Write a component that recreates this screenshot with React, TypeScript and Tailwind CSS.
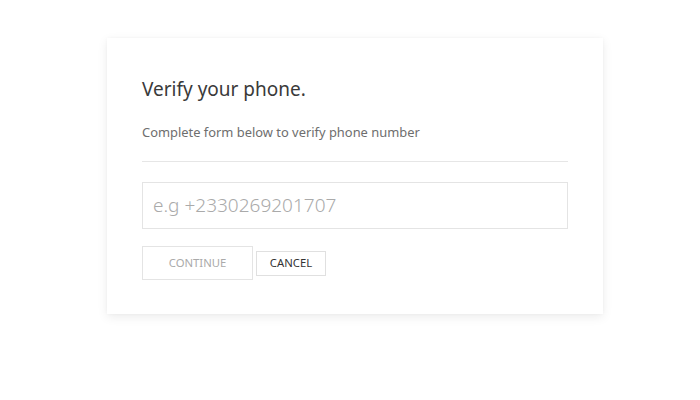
import React from "react";

export default function App() {
  return (
    <div className="w-[700px] h-[400px] bg-white" style={{ fontFamily: '"Noto Sans", "Open Sans", sans-serif' }}>
      <div className="pt-[38px] pl-[107px]">
        <div className="w-[496px] h-[276px] bg-white shadow-[0_3px_10px_rgba(0,0,0,0.08),0_0_3px_rgba(0,0,0,0.03)] pt-[38px] px-[35px]">
          <h1 className="text-[19px] leading-[26px] text-[#3a3a3a] font-normal">Verify your phone.</h1>
          <p className="mt-[21px] text-[12.9px] leading-[18px] text-[#6e6e6e]">Complete form below to verify phone number</p>
          <div className="mt-[20px] h-px bg-[#e6e6e6]" />
          <div className="mt-[20px] h-[47px] border border-[#e4e4e4] flex items-center px-[10px]">
            <input
              className="w-full outline-none text-[19px] text-[#333] placeholder:text-[#aaa] bg-transparent font-light"
              placeholder="e.g +2330269201707"
            />
          </div>
          <div className="mt-[17px] flex items-center gap-[3px]">
            <button className="w-[111px] h-[34px] border border-[#e4e4e4] text-[11.3px] text-[#aaa] bg-white">CONTINUE</button>
            <button className="w-[70px] h-[25px] border border-[#e0e0e0] text-[11.3px] text-[#333] bg-white">CANCEL</button>
          </div>
        </div>
      </div>
    </div>
  );
}
